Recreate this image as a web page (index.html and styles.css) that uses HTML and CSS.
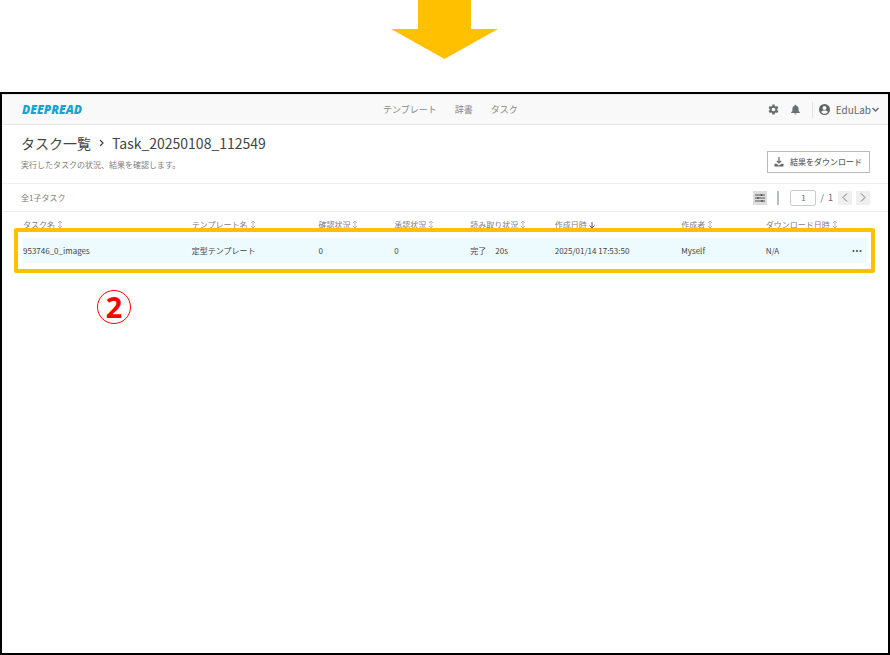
FILE: index.html
```html
<!DOCTYPE html>
<html lang="ja">
<head>
  <meta charset="UTF-8" />
  <meta name="viewport" content="width=device-width, initial-scale=1.0"/>
  <title>DEEPREAD - タスク一覧</title>
  <link rel="stylesheet" href="styles.css">
</head>
<body>
  <svg class="step-arrow" viewBox="0 0 108 59" aria-hidden="true">
    <path d="M27 0h53v29h27L53.500 59 0 29h27z" fill="#ffc000"/>
  </svg>

  <div class="screen">
    <header class="topbar">
      <a class="logo" href="#">DEEPREAD</a>
      <nav class="menu">
        <a href="#">テンプレート</a>
        <a href="#">辞書</a>
        <a href="#">タスク</a>
      </nav>
      <div class="account">
        <button class="icon-btn" aria-label="設定">
          <svg width="11" height="11" viewBox="0 0 24 24"><path fill="currentColor" fill-rule="evenodd" d="M9.500 1h5l.6 3.200 2 1.200 3.100-1.100 2.500 4.300-2.500 2.200v2.400l2.500 2.200-2.500 4.300-3.100-1.100-2 1.200-.6 3.200h-5l-.6-3.200-2-1.200-3.100 1.100-2.500-4.300 2.500-2.200v-2.400L1.300 8.600l2.500-4.300 3.100 1.100 2-1.200zM12 8a4 4 0 1 0 0 8 4 4 0 0 0 0-8z"/></svg>
        </button>
        <button class="icon-btn" aria-label="通知">
          <svg width="11" height="11" viewBox="0 0 24 24"><path fill="currentColor" d="M12 1.500a2 2 0 0 1 2 2v.4c3 .8 4.800 3.300 4.800 6.300v5l2.700 3v1.300h-19v-1.300l2.700-3v-5c0-3 1.800-5.500 4.800-6.300v-.4a2 2 0 0 1 2-2zM9.500 20.500h5a2.500 2.500 0 0 1-5 0z"/></svg>
        </button>
        <button class="user">
          <svg width="11" height="11" viewBox="0 0 24 24"><path fill="currentColor" fill-rule="evenodd" d="M12 0a12 12 0 1 0 0 24 12 12 0 0 0 0-24zm0 4.500a4.200 4.200 0 1 1 0 8.400 4.200 4.200 0 0 1 0-8.400zM4.500 17.500c1.500-2.300 5-3.300 7.500-3.300s6 1 7.500 3.300c-1.700 2.500-4.500 4-7.500 4s-5.800-1.500-7.500-4z"/></svg>
          <span>EduLab</span>
          <svg class="caret" width="7" height="5" viewBox="0 0 7 5"><path d="M.5 1l3 3 3-3" fill="none" stroke="currentColor" stroke-width="1.300"/></svg>
        </button>
      </div>
    </header>

    <div class="page-head">
      <div>
        <h1><a href="#">タスク一覧</a><svg width="5" height="8" viewBox="0 0 5 8"><path d="M1 1l3 3-3 3" fill="none" stroke="currentColor" stroke-width="1.200"/></svg><span>Task_20250108_112549</span></h1>
        <p>実行したタスクの状況、結果を確認します。</p>
      </div>
      <button class="download">
        <svg width="10" height="10" viewBox="0 0 10 10"><path d="M5 0v6M2.800 3.800L5 6l2.200-2.200" fill="none" stroke="currentColor" stroke-width="1.200"/><path d="M.5 6.800h2L5 8.400l2.500-1.600h2v2.700h-9z" fill="currentColor"/></svg>
        結果をダウンロード
      </button>
    </div>

    <div class="toolbar">
      <span class="count">全1子タスク</span>
      <div class="pager">
        <button class="square" aria-label="表示設定">
          <svg width="10" height="10" viewBox="0 0 10 10" fill="none" stroke="#555" stroke-width="1"><path d="M0 2h10M0 5h10M0 8h10"/><path d="M6.500 1v2M3 4v2M7 7v2" stroke-width="1.600"/></svg>
        </button>
        <span class="divider"></span>
        <input type="text" value="1" aria-label="ページ番号">
        <span class="total">/&nbsp; 1</span>
        <button class="square light" aria-label="前のページ">
          <svg width="6" height="9" viewBox="0 0 6 9"><path d="M5 .5l-4 4 4 4" fill="none" stroke="currentColor"/></svg>
        </button>
        <button class="square light next" aria-label="次のページ">
          <svg width="6" height="9" viewBox="0 0 6 9"><path d="M1 .5l4 4-4 4" fill="none" stroke="currentColor"/></svg>
        </button>
      </div>
    </div>

    <div class="list">
      <table>
        <colgroup>
          <col class="c-name"><col class="c-template"><col class="c-state"><col class="c-state"><col class="c-read"><col class="c-date"><col class="c-user"><col class="c-down"><col class="c-more">
        </colgroup>
        <thead>
          <tr>
            <th>タスク名<svg class="sort" viewBox="0 0 6 9"><path d="M3 1v7M1 3l2-2 2 2M1 6l2 2 2-2"/></svg></th>
            <th>テンプレート名<svg class="sort" viewBox="0 0 6 9"><path d="M3 1v7M1 3l2-2 2 2M1 6l2 2 2-2"/></svg></th>
            <th>確認状況<svg class="sort" viewBox="0 0 6 9"><path d="M3 1v7M1 3l2-2 2 2M1 6l2 2 2-2"/></svg></th>
            <th>承認状況<svg class="sort" viewBox="0 0 6 9"><path d="M3 1v7M1 3l2-2 2 2M1 6l2 2 2-2"/></svg></th>
            <th>読み取り状況<svg class="sort" viewBox="0 0 6 9"><path d="M3 1v7M1 3l2-2 2 2M1 6l2 2 2-2"/></svg></th>
            <th>作成日時<svg class="sort active" viewBox="0 0 6 9"><path d="M3 2v6M.5 5.500L3 8l2.500-2.500"/></svg></th>
            <th>作成者<svg class="sort" viewBox="0 0 6 9"><path d="M3 1v7M1 3l2-2 2 2M1 6l2 2 2-2"/></svg></th>
            <th colspan="2">ダウンロード日時<svg class="sort" viewBox="0 0 6 9"><path d="M3 1v7M1 3l2-2 2 2M1 6l2 2 2-2"/></svg></th>
          </tr>
        </thead>
        <tbody>
          <tr>
            <td>953746_0_images</td>
            <td>定型テンプレート</td>
            <td>0</td>
            <td>0</td>
            <td>完了<span class="time">20s</span></td>
            <td>2025/01/14 17:53:50</td>
            <td>Myself</td>
            <td>N/A</td>
            <td class="more"><button class="icon-btn" aria-label="メニュー"><svg width="10" height="4" viewBox="0 0 10 4" fill="currentColor"><circle cx="1.500" cy="2" r="1"/><circle cx="5" cy="2" r="1"/><circle cx="8.500" cy="2" r="1"/></svg></button></td>
          </tr>
        </tbody>
      </table>
      <div class="highlight"></div>
      <div class="step-number">2</div>
    </div>
  </div>
</body>
</html>
```

FILE: styles.css
```css
:root {
  --text-color: #444;
  --muted-color: #7d7d7d;
  --line-color: #eee;
  --mark-color: #ffc000;
}
* {
  box-sizing: border-box;
}
body {
  display: flex;
  flex-direction: column;
  min-height: 100vh;
  margin: 0;
  background-color: #fff;
  color: var(--text-color);
  font-family: "Noto Sans CJK JP", sans-serif;
  font-size: 8px;
  line-height: 12px;
}
a {
  color: inherit;
  text-decoration: none;
}
button {
  display: flex;
  align-items: center;
  justify-content: center;
  padding: 0;
  border: none;
  background: none;
  color: inherit;
  font: inherit;
  cursor: pointer;
}
.step-arrow {
  display: block;
  width: 108px;
  height: 59px;
  margin: 0 auto 33px;
}
.screen {
  flex: 1;
  border: 2px solid #000;
}

/* header */
.topbar {
  display: grid;
  grid-template-columns: 1fr auto 1fr;
  align-items: center;
  height: 31px;
  padding: 0 9px 0 20px;
  background-color: #f9f9f9;
  border-top: 1px solid #e6e6e6;
  border-bottom: 1px solid #e8e8e8;
}
.logo {
  color: #11a5d3;
  font-family: "Open Sans", sans-serif;
  font-size: 12px;
  font-style: italic;
  font-weight: 800;
}
.menu {
  display: flex;
  gap: 18px;
  color: #888;
  font-size: 9px;
}
.account {
  display: flex;
  align-items: center;
  justify-content: flex-end;
  gap: 11px;
  color: #6c7074;
}
.user {
  height: 16px;
  padding-left: 6px;
  border-left: 1px solid #e2e2e2;
  color: #606468;
  font-size: 10px;
}
.user span {
  margin-left: 6px;
}
.caret {
  margin-left: 1px;
}

/* title */
.page-head {
  display: flex;
  justify-content: space-between;
  height: 59px;
  padding: 8px 18px 0 19px;
  border-bottom: 1px solid var(--line-color);
}
h1 {
  display: flex;
  align-items: center;
  gap: 8px;
  margin: 0;
  font-size: 14px;
  font-weight: normal;
  line-height: 20px;
}
.page-head p {
  margin: 6px 0 0;
  color: var(--muted-color);
}
.download {
  gap: 6px;
  height: 22px;
  margin-top: 18px;
  padding: 0 7px 0 6px;
  border: 1px solid #bbb;
  color: #666;
  font-weight: 500;
}

/* toolbar */
.toolbar {
  display: flex;
  align-items: center;
  justify-content: space-between;
  height: 28px;
  padding: 0 18px 0 19px;
  border-bottom: 1px solid var(--line-color);
}
.count {
  color: var(--muted-color);
}
.pager {
  display: flex;
  align-items: center;
}
.square {
  width: 14px;
  height: 14px;
  background-color: #ddd;
}
.square.light {
  background-color: #efefef;
  color: #777;
}
.square.next {
  margin-left: 4px;
}
.divider {
  width: 2px;
  height: 14px;
  margin: 0 11px 0 10px;
  background-color: #b8bcc0;
}
.pager input {
  width: 26px;
  height: 16px;
  padding: 0;
  border: 1px solid #ccc;
  border-radius: 2px;
  color: #666;
  font: inherit;
  text-align: center;
}
.total {
  margin: 0 5px 0 4px;
  color: #666;
  font-size: 9px;
}

/* table */
.list {
  position: relative;
  padding: 0 21px;
}
table {
  width: 100%;
  border-collapse: collapse;
  table-layout: fixed;
}
.c-name { width: 20%; }
.c-template { width: 15%; }
.c-state { width: 9%; }
.c-read { width: 10%; }
.c-date { width: 15%; }
.c-user { width: 10%; }
.c-down { width: 9%; }
.c-more { width: 3%; }
th,
td {
  padding: 0;
  text-align: left;
  white-space: nowrap;
}
th {
  height: 26px;
  color: var(--muted-color);
  font-weight: normal;
}
td {
  height: 25px;
  background-color: #edfbff;
}
.sort {
  width: 6px;
  height: 9px;
  margin-left: 2px;
  vertical-align: -1px;
  fill: none;
  stroke: #bbb;
  stroke-width: 1;
}
.sort.active {
  stroke: #555;
}
.time {
  margin-left: 9px;
}
.more .icon-btn {
  margin: 0 5px 0 auto;
}

/* step marks */
.highlight {
  position: absolute;
  top: 16px;
  left: 12px;
  right: 13px;
  height: 45px;
  border: 4px solid var(--mark-color);
  border-radius: 2px;
}
.step-number {
  position: absolute;
  top: 78px;
  left: 95px;
  width: 34px;
  height: 34px;
  border: 1px solid #f00;
  border-radius: 50%;
  color: #f00;
  font-family: "Noto Sans", sans-serif;
  font-size: 29px;
  font-weight: bold;
  line-height: 32px;
  text-align: center;
}
```
